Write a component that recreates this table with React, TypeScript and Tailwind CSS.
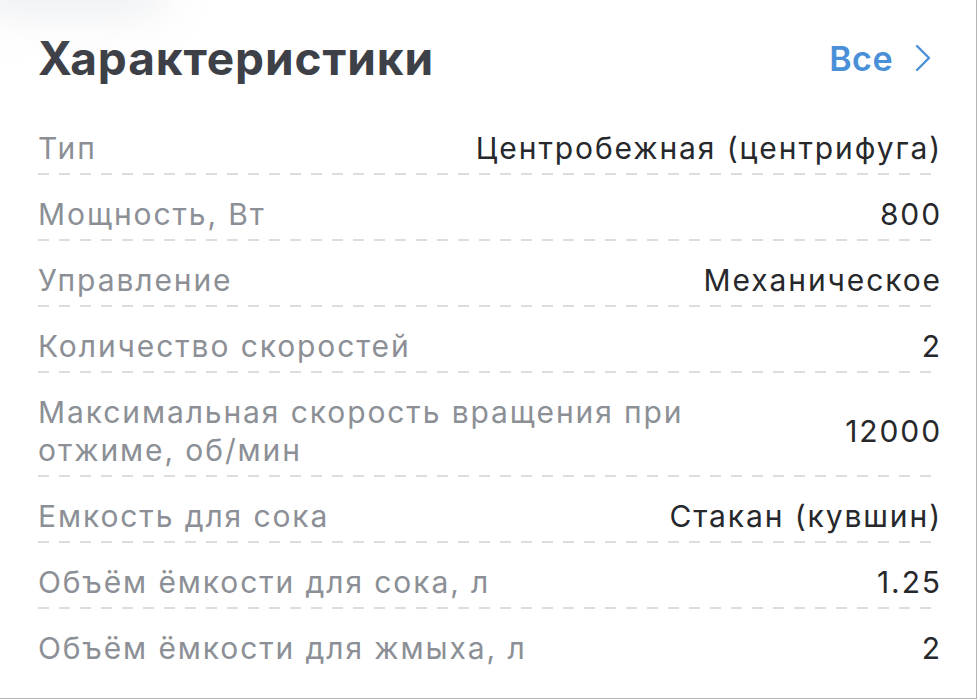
type Spec = { label: string; value: string };

const specs: Spec[] = [
  { label: "Тип", value: "Центробежная (центрифуга)" },
  { label: "Мощность, Вт", value: "800" },
  { label: "Управление", value: "Механическое" },
  { label: "Количество скоростей", value: "2" },
  { label: "Максимальная скорость вращения при отжиме, об/мин", value: "12000" },
  { label: "Емкость для сока", value: "Стакан (кувшин)" },
  { label: "Объём ёмкости для сока, л", value: "1.25" },
  { label: "Объём ёмкости для жмыха, л", value: "2" },
];

function SpecRow({ spec, last }: { spec: Spec; last: boolean }) {
  return (
    <div className="pt-[20px]">
      <div className="flex items-center justify-between gap-6 pb-[6px] text-[30px] leading-[38px] tracking-[1.9px]">
        <span className="max-w-[700px] text-[#8c9096]">{spec.label}</span>
        <span className="shrink-0 text-right text-[#26282b]">{spec.value}</span>
      </div>
      {!last && (
        <div className="mr-[3px] h-[2px] bg-[linear-gradient(to_right,#dcdddf_11px,transparent_11px)] bg-[length:21px_2px] bg-repeat-x" />
      )}
    </div>
  );
}

export default function App() {
  return (
    <div className="relative h-[700px] w-[978px] overflow-hidden bg-white font-['Inter',sans-serif]">
      <div className="pointer-events-none absolute -left-6 -top-8 h-[42px] w-[190px] rounded-full bg-gray-300/50 blur-xl" />
      <div className="h-[699px] w-[977px] border-b border-r border-[#b5b5b5] pl-[38px] pr-[34px] pt-[30px]">
        <div className="flex items-center justify-between">
          <h2 className="text-[46px] font-bold leading-[56px] tracking-[0.9px] text-[#3d4147]">
            Характеристики
          </h2>
          <a className="flex items-center gap-[22px] pr-[11px] text-[34px] font-semibold tracking-[0.5px] text-[#4a90d9]">
            Все
            <svg width="16" height="28" viewBox="0 0 16 28" fill="none">
              <polyline
                points="2,2 14,14 2,26"
                stroke="#4a90d9"
                strokeWidth="2.4"
                strokeLinecap="round"
                strokeLinejoin="round"
              />
            </svg>
          </a>
        </div>
        <div className="mt-[23px]">
          {specs.map((s, i) => (
            <SpecRow key={s.label} spec={s} last={i === specs.length - 1} />
          ))}
        </div>
      </div>
    </div>
  );
}
